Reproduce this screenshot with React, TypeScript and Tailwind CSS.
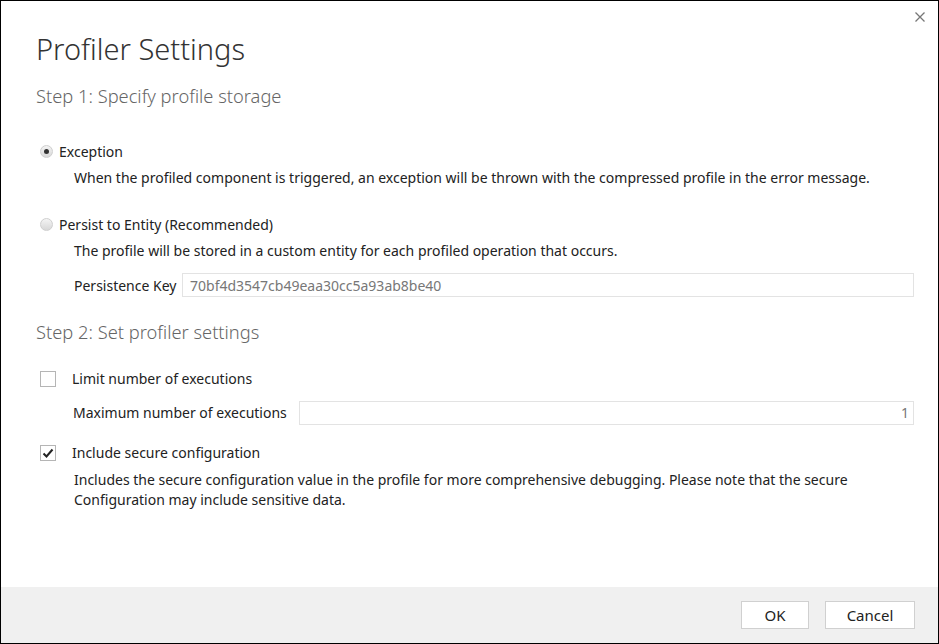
import React from 'react';

const font = { fontFamily: '"Noto Sans", "Open Sans", sans-serif' };

const Radio: React.FC<{ checked?: boolean }> = ({ checked }) => (
  <span className="w-[13px] h-[13px] rounded-full border border-[#cfcfcf] bg-gradient-to-b from-[#f4f4f4] to-[#d8d8d8] flex items-center justify-center shrink-0">
    {checked && <span className="w-[5px] h-[5px] rounded-full bg-[#333]" />}
  </span>
);

const Checkbox: React.FC<{ checked?: boolean }> = ({ checked }) => (
  <span className="w-4 h-4 border border-[#b5b5b5] bg-white flex items-center justify-center shrink-0">
    {checked && (
      <svg width="12" height="12" viewBox="0 0 12 12">
        <path d="M1.5 6.5 L4.5 9.5 L10.5 2.5" fill="none" stroke="#222" strokeWidth="2" />
      </svg>
    )}
  </span>
);

export default function App() {
  return (
    <div className="w-[939px] h-[644px] border border-black bg-white flex flex-col text-[#222] text-[14px]" style={font}>
      <div className="flex-1 relative pl-[35px] pr-[24px]">
        <button className="absolute right-[10px] top-[8px] text-[#777]">
          <svg width="16" height="16" viewBox="0 0 16 16">
            <path d="M3.5 3.5 L12.5 12.5 M12.5 3.5 L3.5 12.5" stroke="#777" strokeWidth="1.3" />
          </svg>
        </button>
        <h1 className="text-[29px] font-light leading-none pt-[33px] text-[#333]">Profiler Settings</h1>
        <h2 className="text-[18.3px] font-light text-[#666] mt-[24px] leading-none">Step 1: Specify profile storage</h2>

        <div className="mt-[36px] flex items-center gap-[6px] pl-[4px] h-[20px]">
          <Radio checked />
          <span>Exception</span>
        </div>
        <p className="pl-[38px] mt-[7px] leading-[20px]">
          When the profiled component is triggered, an exception will be thrown with the compressed profile in the error message.
        </p>

        <div className="mt-[26px] flex items-center gap-[6px] pl-[4px] h-[20px]">
          <Radio />
          <span>Persist to Entity (Recommended)</span>
        </div>
        <p className="pl-[38px] mt-[7px] leading-[20px]">
          The profile will be stored in a custom entity for each profiled operation that occurs.
        </p>
        <div className="pl-[38px] mt-[12px] flex items-center gap-[8px]">
          <span className="w-[100px] shrink-0 whitespace-nowrap">Persistence Key</span>
          <div className="flex-1 h-[24px] border border-[#e3e3e3] px-[7px] flex items-center text-[#777]">
            70bf4d3547cb49eaa30cc5a93ab8be40
          </div>
        </div>

        <h2 className="text-[18.3px] font-light text-[#666] mt-[26px] leading-none">Step 2: Set profiler settings</h2>

        <div className="mt-[27px] flex items-center gap-[16px] pl-[4px] h-[20px]">
          <Checkbox />
          <span>Limit number of executions</span>
        </div>
        <div className="pl-[37px] mt-[12px] flex items-center gap-[13px]">
          <span className="w-[213px] shrink-0 whitespace-nowrap">Maximum number of executions</span>
          <div className="flex-1 h-[24px] border border-[#e3e3e3] px-[4px] flex items-center justify-end text-[#777]">1</div>
        </div>

        <div className="mt-[18px] flex items-center gap-[16px] pl-[4px] h-[20px]">
          <Checkbox checked />
          <span>Include secure configuration</span>
        </div>
        <p className="pl-[38px] mt-[7px] leading-[20px] max-w-[830px]">
          Includes the secure configuration value in the profile for more comprehensive debugging. Please note that the secure Configuration may include sensitive data.
        </p>
      </div>
      <div className="h-[56px] bg-[#f0f0f0] flex items-center justify-end gap-[16px] pr-[23px] text-[15px]">
        <button className="w-[68px] h-[28px] bg-white border border-[#d0d0d0] text-[#222]">OK</button>
        <button className="w-[90px] h-[28px] bg-white border border-[#d0d0d0] text-[#222]">Cancel</button>
      </div>
    </div>
  );
}
